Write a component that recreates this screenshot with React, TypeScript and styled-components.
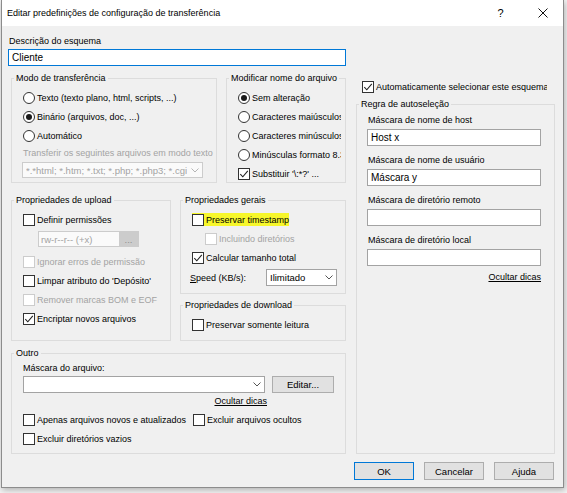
import React from 'react';
import styled, { createGlobalStyle } from 'styled-components';

const GlobalStyle = createGlobalStyle`
  html, body {
    margin: 0;
    padding: 0;
    background: #f3f3f3;
  }
  body {
    font-family: 'Liberation Sans', Arial, sans-serif;
    font-size: 9px;
    color: #000;
  }
  *, *::before, *::after {
    box-sizing: border-box;
  }
`;

const Screen = styled.div`
  width: 567px;
  height: 493px;
  padding-left: 1px;
  overflow: hidden;
  background: #f3f3f3;
`;

const Window = styled.div`
  width: 563px;
  height: 488px;
  display: flex;
  flex-direction: column;
  background: #f0f0f0;
  border: 1px solid #8c8c8c;
  border-top: none;
  box-shadow: 1px 2px 6px rgba(0, 0, 0, 0.28);
`;

const TitleBar = styled.div`
  height: 26px;
  flex-shrink: 0;
  display: flex;
  align-items: center;
  background: #fff;
  padding-left: 5px;
`;

const TitleText = styled.div`
  flex: 1;
`;

const TitleButton = styled.div<{ $w: number }>`
  width: ${p => p.$w}px;
  height: 26px;
  display: flex;
  align-items: center;
  justify-content: center;
  font-size: 11px;
`;

const Body = styled.div`
  flex: 1;
  display: flex;
  flex-direction: column;
  padding: 10px 0 0 6px;
`;

const SchemeLabel = styled.div`
  line-height: 11px;
  margin: 0 0 2px 1px;
`;

const TextBox = styled.div<{ $w: number; $focused?: boolean; $h?: number }>`
  width: ${p => p.$w}px;
  height: ${p => p.$h ?? 17}px;
  flex-shrink: 0;
  display: flex;
  align-items: center;
  padding-left: 3px;
  background: #fff;
  border: 1px solid ${p => (p.$focused ? '#0078d7' : '#a3a3a3')};
  font-size: 10px;
  white-space: nowrap;
  overflow: hidden;
`;

const Main = styled.div`
  display: flex;
  gap: 10px;
  margin: 7px 0 0 3px;
`;

const LeftRegion = styled.div`
  width: 335px;
  display: flex;
  flex-direction: column;
`;

const GroupRow = styled.div<{ $gap: number; $top?: number }>`
  display: flex;
  gap: ${p => p.$gap}px;
  margin-top: ${p => p.$top ?? 0}px;
`;

const SubColumn = styled.div`
  display: flex;
  flex-direction: column;
  gap: 6px;
`;

const Group = styled.fieldset<{ $w: number; $h: number; $padTop?: number; $padRight?: number }>`
  width: ${p => p.$w}px;
  height: ${p => p.$h}px;
  margin: 0;
  min-width: 0;
  padding: ${p => p.$padTop ?? 4}px ${p => p.$padRight ?? 4}px 0 11px;
  border: 1px solid #dcdcdc;
  display: flex;
  flex-direction: column;
  overflow: hidden;
`;

const Legend = styled.legend`
  line-height: 11px;
  padding: 0 2px;
  margin-left: -9px;
`;

const OptionRow = styled.div<{ $indent?: number; $disabled?: boolean; $w?: number }>`
  height: 19px;
  flex-shrink: 0;
  display: flex;
  align-items: center;
  gap: 2px;
  padding-left: ${p => p.$indent ?? 0}px;
  white-space: nowrap;
  overflow: hidden;
  color: ${p => (p.$disabled ? '#a3a3a3' : '#000')};
  ${p => (p.$w ? `width: ${p.$w}px;` : '')}
`;

const OptionPair = styled.div`
  display: flex;
`;

const RadioCircle = styled.span<{ $checked?: boolean }>`
  width: 12px;
  height: 12px;
  flex-shrink: 0;
  border-radius: 50%;
  border: 1px solid #333;
  background: #fff;
  display: flex;
  align-items: center;
  justify-content: center;
  &::after {
    content: '';
    width: 6px;
    height: 6px;
    border-radius: 50%;
    background: ${p => (p.$checked ? '#1a1a1a' : 'transparent')};
  }
`;

const CheckBox = styled.span<{ $disabled?: boolean }>`
  width: 12px;
  height: 12px;
  flex-shrink: 0;
  border: 1px solid ${p => (p.$disabled ? '#cccccc' : '#333')};
  background: #fff;
  display: flex;
  align-items: center;
  justify-content: center;
`;

const Highlight = styled.span`
  height: 13px;
  display: flex;
  align-items: center;
  gap: 2px;
  margin-left: -2px;
  padding-left: 2px;
  background: #f7f72b;
`;

const HintLine = styled.div<{ $top?: number; $left?: number }>`
  line-height: 11px;
  flex-shrink: 0;
  white-space: nowrap;
  margin-top: ${p => p.$top ?? 0}px;
  margin-left: ${p => p.$left ?? 0}px;
`;

const DisabledHint = styled(HintLine)`
  color: #a3a3a3;
`;

const Combo = styled.div<{ $w: number; $disabled?: boolean; $h?: number }>`
  width: ${p => p.$w}px;
  height: ${p => p.$h ?? 17}px;
  flex-shrink: 0;
  display: flex;
  align-items: center;
  background: ${p => (p.$disabled ? '#fafafa' : '#fff')};
  border: 1px solid ${p => (p.$disabled ? '#cccccc' : '#a3a3a3')};
  color: ${p => (p.$disabled ? '#a3a3a3' : '#000')};
  font-size: 9.5px;
  padding-left: 3px;
`;

const ComboText = styled.span`
  flex: 1;
  overflow: hidden;
  white-space: nowrap;
`;

const ComboArrow = styled.span`
  width: 15px;
  height: 100%;
  flex-shrink: 0;
  display: flex;
  align-items: center;
  justify-content: center;
`;

const PermField = styled.div`
  width: 101px;
  height: 16px;
  margin: 2px 0 0 15px;
  flex-shrink: 0;
  display: flex;
  align-items: center;
  padding-left: 2px;
  background: #fafafa;
  border: 1px solid #cccccc;
  color: #a3a3a3;
  font-size: 9.5px;
`;

const PermButton = styled.span`
  width: 19px;
  height: 14px;
  display: flex;
  align-items: center;
  justify-content: center;
  background: #cccccc;
  color: #8f8f8f;
`;

const Spacer = styled.div<{ $h: number }>`
  height: ${p => p.$h}px;
  flex-shrink: 0;
`;

const SpeedRow = styled.div`
  height: 17px;
  margin: 2px 0 0 -2px;
  display: flex;
  align-items: center;
`;

const SpeedLabel = styled.span`
  width: 76px;
`;

const FieldLabel = styled.div<{ $top: number }>`
  line-height: 11px;
  margin-top: ${p => p.$top}px;
  flex-shrink: 0;
`;

const FieldBox = styled(TextBox)`
  margin: 3px 0 0 -1px;
`;

const LinkText = styled.div<{ $top: number; $w?: number }>`
  line-height: 11px;
  margin-top: ${p => p.$top}px;
  flex-shrink: 0;
  text-align: right;
  ${p => (p.$w ? `width: ${p.$w}px;` : '')}
  span {
    text-decoration: underline;
  }
`;

const MaskRow = styled.div<{ $top?: number; $left?: number }>`
  display: flex;
  gap: 7px;
  margin-top: ${p => p.$top ?? 2}px;
  margin-left: ${p => p.$left ?? 0}px;
  flex-shrink: 0;
`;

const Button = styled.div<{ $w: number; $default?: boolean; $h?: number }>`
  width: ${p => p.$w}px;
  height: ${p => p.$h ?? 18}px;
  flex-shrink: 0;
  display: flex;
  align-items: center;
  justify-content: center;
  background: #e1e1e1;
  border: 1px solid ${p => (p.$default ? '#0078d7' : '#adadad')};
  font-size: 9.5px;
`;

const RightColumn = styled.div`
  width: 199px;
  display: flex;
  flex-direction: column;
`;

const AutoRow = styled(OptionRow)`
  height: 14px;
  width: 185px;
  margin: 7px 0 0 6px;
`;

const ButtonBar = styled.div`
  display: flex;
  justify-content: flex-end;
  gap: 10px;
  margin-top: 8px;
  padding-right: 9px;
`;

const Check = () => (
  <svg width="10" height="10" viewBox="0 0 10 10">
    <path d="M1.3 5.2 L3.8 7.8 L8.8 1.8" fill="none" stroke="#222" strokeWidth="1.1" />
  </svg>
);

const Chevron = ({ color = '#555' }: { color?: string }) => (
  <svg width="8" height="5" viewBox="0 0 8 5">
    <path d="M0.5 0.5 L4 4 L7.5 0.5" fill="none" stroke={color} strokeWidth="1" />
  </svg>
);

const CloseIcon = () => (
  <svg width="10" height="10" viewBox="0 0 10 10">
    <path d="M0.5 0.5 L9.5 9.5 M9.5 0.5 L0.5 9.5" stroke="#111" strokeWidth="1" />
  </svg>
);

type OptProps = {
  label: React.ReactNode;
  checked?: boolean;
  disabled?: boolean;
  indent?: number;
  w?: number;
};

const RadioOption = ({ label, checked }: OptProps) => (
  <OptionRow>
    <RadioCircle $checked={checked} />
    <span>{label}</span>
  </OptionRow>
);

const CheckOption = ({ label, checked, disabled, indent, w }: OptProps) => (
  <OptionRow $disabled={disabled} $indent={indent} $w={w}>
    <CheckBox $disabled={disabled}>{checked && <Check />}</CheckBox>
    <span>{label}</span>
  </OptionRow>
);

const autoRule = [
  { label: 'Máscara de nome de host', value: 'Host x' },
  { label: 'Máscara de nome de usuário', value: 'Máscara y' },
  { label: 'Máscara de diretório remoto', value: '' },
  { label: 'Máscara de diretório local', value: '' },
];

export default function App() {
  return (
    <Screen>
      <GlobalStyle />
      <Window>
        <TitleBar>
          <TitleText>Editar predefinições de configuração de transferência</TitleText>
          <TitleButton $w={45}>?</TitleButton>
          <TitleButton $w={40}>
            <CloseIcon />
          </TitleButton>
        </TitleBar>
        <Body>
          <SchemeLabel>Descrição do esquema</SchemeLabel>
          <TextBox $w={338} $focused>
            Cliente
          </TextBox>

          <Main>
            <LeftRegion>
              <GroupRow $gap={9}>
                <Group $w={206} $h={110}>
                  <Legend>Modo de transferência</Legend>
                  <RadioOption label="Texto (texto plano, html, scripts, ...)" />
                  <RadioOption label="Binário (arquivos, doc, ...)" checked />
                  <RadioOption label="Automático" />
                  <DisabledHint $top={3}>Transferir os seguintes arquivos em modo texto</DisabledHint>
                  <MaskRow $top={3} $left={-1}>
                    <Combo $w={181} $h={16} $disabled>
                      <ComboText>*.*html; *.htm; *.txt; *.php; *.php3; *.cgi; *.c; *.cpp</ComboText>
                      <ComboArrow>
                        <Chevron color="#b5b5b5" />
                      </ComboArrow>
                    </Combo>
                  </MaskRow>
                </Group>
                <Group $w={120} $h={110}>
                  <Legend>Modificar nome do arquivo</Legend>
                  <RadioOption label="Sem alteração" checked />
                  <RadioOption label="Caracteres maiúsculos" />
                  <RadioOption label="Caracteres minúsculos" />
                  <RadioOption label="Minúsculas formato 8.3" />
                  <CheckOption label={"Substituir '\\:*?' ..."} checked />
                </Group>
              </GroupRow>

              <GroupRow $gap={9} $top={12}>
                <Group $w={160} $h={146}>
                  <Legend>Propriedades de upload</Legend>
                  <CheckOption label="Definir permissões" />
                  <PermField>
                    <ComboText>rw-r--r-- (+x)</ComboText>
                    <PermButton>...</PermButton>
                  </PermField>
                  <Spacer $h={5} />
                  <CheckOption label="Ignorar erros de permissão" disabled />
                  <CheckOption label="Limpar atributo do 'Depósito'" />
                  <CheckOption label="Remover marcas BOM e EOF" disabled />
                  <CheckOption label="Encriptar novos arquivos" checked />
                </Group>
                <SubColumn>
                  <Group $w={166} $h={99} $padRight={8}>
                    <Legend>Propriedades gerais</Legend>
                    <OptionRow>
                      <Highlight>
                        <CheckBox />
                        <span>Preservar timestamp</span>
                      </Highlight>
                    </OptionRow>
                    <CheckOption label="Incluindo diretórios" disabled indent={13} />
                    <CheckOption label="Calcular tamanho total" checked />
                    <SpeedRow>
                      <SpeedLabel>
                        <u>S</u>peed (KB/s):
                      </SpeedLabel>
                      <Combo $w={71}>
                        <ComboText>Ilimitado</ComboText>
                        <ComboArrow>
                          <Chevron />
                        </ComboArrow>
                      </Combo>
                    </SpeedRow>
                  </Group>
                  <Group $w={166} $h={41}>
                    <Legend>Propriedades de download</Legend>
                    <CheckOption label="Preservar somente leitura" />
                  </Group>
                </SubColumn>
              </GroupRow>

              <GroupRow $gap={0} $top={7}>
                <Group $w={335} $h={106}>
                  <Legend>Outro</Legend>
                  <HintLine>Máscara do arquivo:</HintLine>
                  <MaskRow>
                    <Combo $w={242}>
                      <ComboText />
                      <ComboArrow>
                        <Chevron />
                      </ComboArrow>
                    </Combo>
                    <Button $w={62} $h={17}>
                      Editar...
                    </Button>
                  </MaskRow>
                  <LinkText $top={3} $w={244}>
                    <span>Ocultar dicas</span>
                  </LinkText>
                  <Spacer $h={3} />
                  <OptionPair>
                    <CheckOption label="Apenas arquivos novos e atualizados" w={170} />
                    <CheckOption label="Excluir arquivos ocultos" />
                  </OptionPair>
                  <CheckOption label="Excluir diretórios vazios" />
                </Group>
              </GroupRow>
            </LeftRegion>

            <RightColumn>
              <AutoRow>
                <CheckBox>
                  <Check />
                </CheckBox>
                <span>Automaticamente selecionar este esquema</span>
              </AutoRow>
              <GroupRow $gap={0} $top={5}>
                <Group $w={199} $h={355} $padTop={5} $padRight={13}>
                  <Legend>Regra de autoseleção</Legend>
                  {autoRule.map((f, i) => (
                    <React.Fragment key={f.label}>
                      <FieldLabel $top={i === 0 ? 0 : 9}>{f.label}</FieldLabel>
                      <FieldBox $w={174}>{f.value}</FieldBox>
                    </React.Fragment>
                  ))}
                  <LinkText $top={6}>
                    <span>Ocultar dicas</span>
                  </LinkText>
                </Group>
              </GroupRow>
            </RightColumn>
          </Main>

          <ButtonBar>
            <Button $w={60} $default>
              OK
            </Button>
            <Button $w={60}>Cancelar</Button>
            <Button $w={60}>Ajuda</Button>
          </ButtonBar>
        </Body>
      </Window>
    </Screen>
  );
}
